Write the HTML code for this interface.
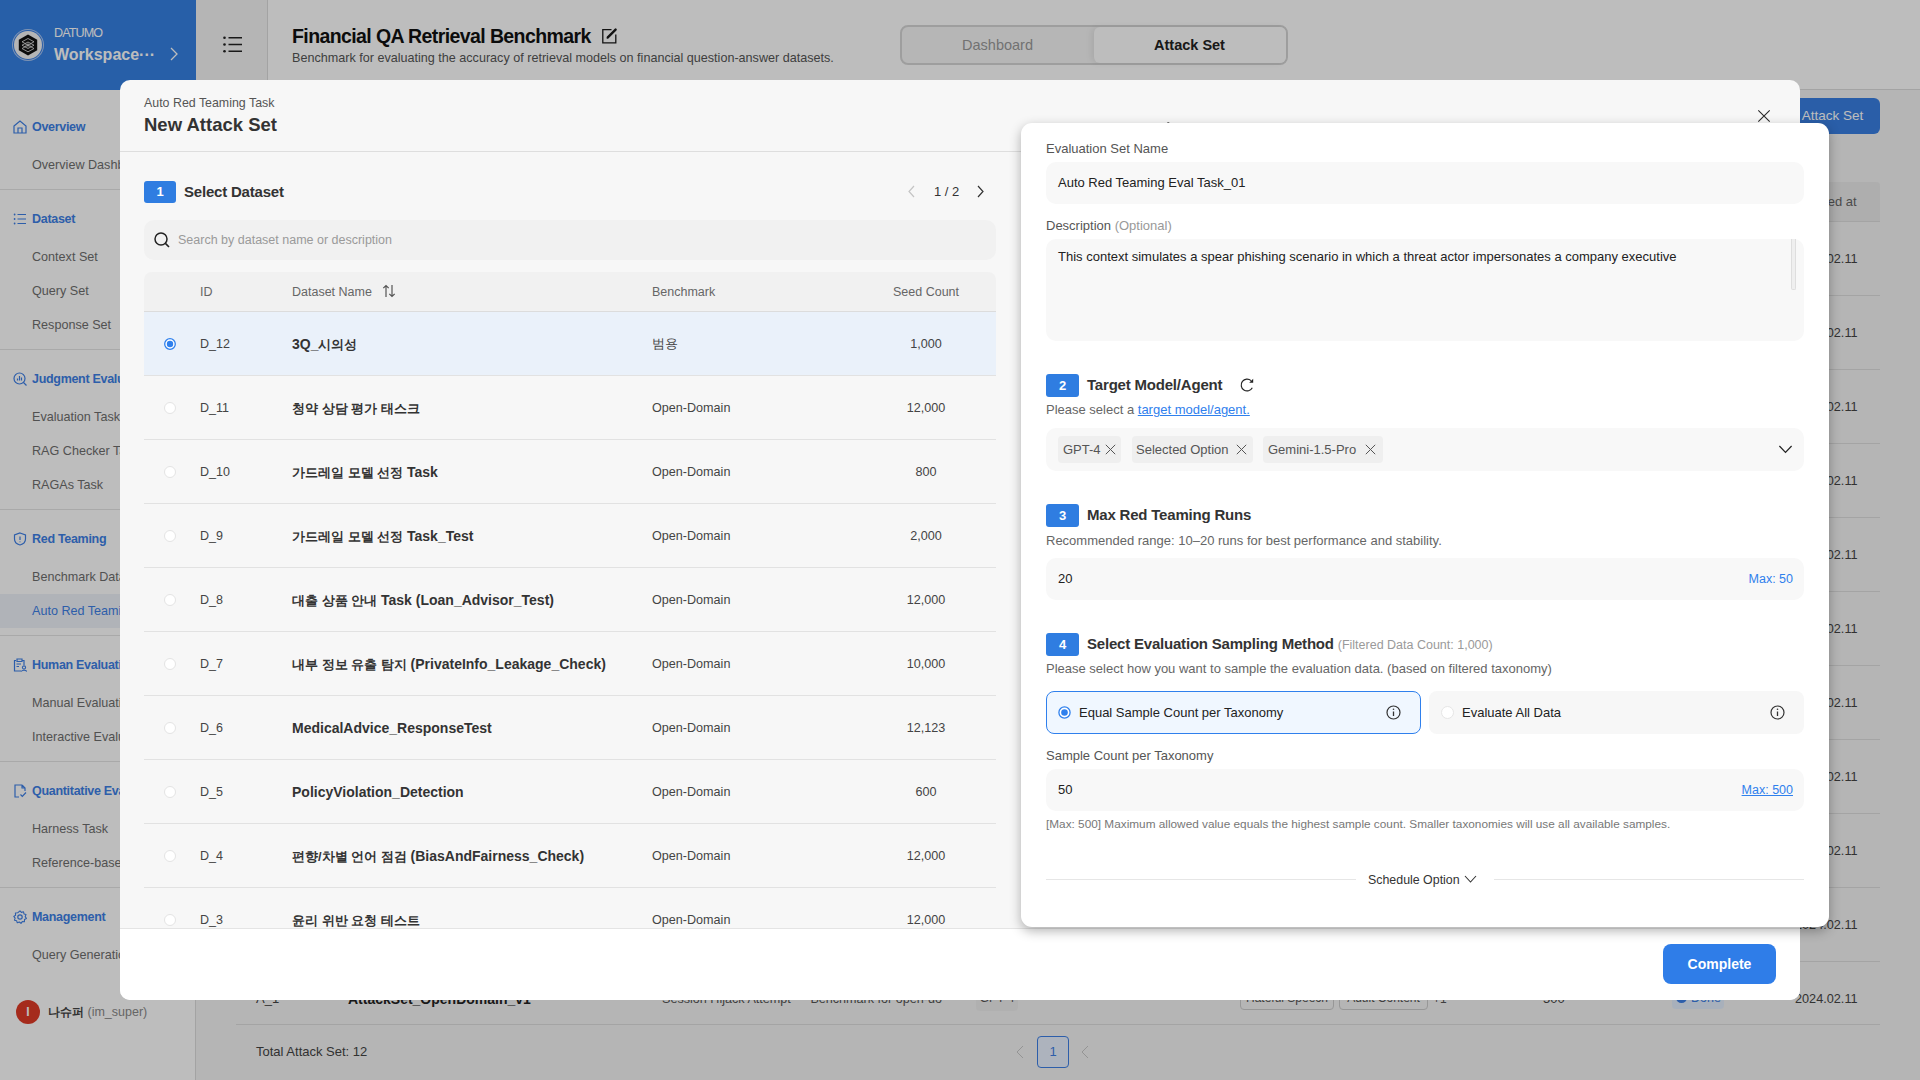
<!DOCTYPE html>
<html><head><meta charset="utf-8">
<style>
*{box-sizing:border-box;margin:0;padding:0}
html,body{width:1920px;height:1080px;overflow:hidden;background:#fff;font-family:"Liberation Sans",sans-serif;color:#333}
.a{position:absolute;white-space:nowrap}
.t{position:absolute;white-space:nowrap;line-height:20px}
/* background page */
#side{position:absolute;left:0;top:0;width:196px;height:1080px;background:#fff;border-right:1px solid #dcdcdc}
#sidehead{position:absolute;left:0;top:0;width:196px;height:90px;background:#3580e3}
.nav{margin-top:1px;position:absolute;left:32px;font-size:12.5px;font-weight:700;letter-spacing:-0.3px;color:#3d7fe6;line-height:20px}
.sub{margin-top:1px;position:absolute;left:32px;font-size:12.6px;color:#6e6e6e;line-height:20px}
.div{position:absolute;left:0;width:196px;height:1px;background:#e4e4e4}
.nicon{position:absolute;left:13px;width:14px;height:14px}
#ov{position:absolute;left:0;top:0;width:1920px;height:1080px;background:rgba(0,0,0,0.26)}
/* modal */
#modal{position:absolute;left:120px;top:80px;width:1680px;height:920px;background:#f7f7f7;border-radius:10px;overflow:hidden}
.badge{position:absolute;width:33px;height:23px;background:#2f7de1;border-radius:3px;color:#fff;font-size:13px;font-weight:700;text-align:center;line-height:23px}
.h2{margin-top:1px;position:absolute;font-size:15px;font-weight:700;color:#333;line-height:22px;letter-spacing:-0.2px;white-space:nowrap}
.row{position:absolute;left:24px;width:852px;height:64px;border-bottom:1px solid #e2e2e2}
.row .rd{position:absolute;left:20px;top:26px;width:12px;height:12px;border-radius:50%;background:#fff;border:1px solid #e4e4e4}
.row .id{position:absolute;left:56px;top:22px;font-size:12.5px;color:#444;line-height:20px}
.row .nm{position:absolute;left:148px;top:21px;font-size:14px;font-weight:700;color:#333;line-height:22px;white-space:nowrap}
.row .bm{position:absolute;left:508px;top:22px;font-size:12.6px;color:#444;line-height:20px}
.row .sc{position:absolute;left:722px;width:120px;text-align:center;top:22px;font-size:12.6px;color:#444;line-height:20px}
/* right panel */
#rp{position:absolute;left:1021px;top:123px;width:808px;height:804px;background:#fff;border-radius:11px;box-shadow:0 4px 12px rgba(0,0,0,0.3);overflow:hidden}
.lbl{margin-top:1px;position:absolute;left:25px;font-size:13px;color:#555;line-height:20px;white-space:nowrap}
.inp{position:absolute;left:25px;width:758px;background:#f8f8f8;border-radius:10px}
.gray{color:#999}
</style></head><body>

<!-- ============ BACKGROUND PAGE ============ -->
<div id="side">
  <div id="sidehead">
    <div class="a" style="left:14px;top:31px;width:28px;height:28px;border-radius:50%;background:#f4f4f4;box-shadow:0 0 0 1px #397fe3,0 0 0 2px #a9c6f2"></div>
    <svg class="a" style="left:18px;top:34px" width="20" height="22" viewBox="0 0 20 22"><path d="M10 0.5 L19.2 5.8 L19.2 16.2 L10 21.5 L0.8 16.2 L0.8 5.8 Z" fill="#111"/><path d="M10 4.5 L16 7.8 L10 11.1 L4 7.8 Z M10 8 L16 11.2 L10 14.5 L4 11.2 Z M10 11.3 L16 14.5 L10 17.8 L4 14.5 Z" fill="none" stroke="#e8e8e8" stroke-width="0.8"/><path d="M7 11 H13 M10 8.5 V13.5" stroke="#e8e8e8" stroke-width="0.6"/></svg>
    <div class="a" style="left:54px;top:25px;font-size:12.6px;letter-spacing:-0.9px;color:#fff;line-height:16px">DATUMO</div>
    <div class="a" style="left:54px;top:44px;font-size:16px;font-weight:700;color:#fff;line-height:22px">Workspace···</div>
    <svg class="a" style="left:169px;top:47px" width="10" height="14" viewBox="0 0 10 14"><path d="M2 1 L8 7 L2 13" fill="none" stroke="#fff" stroke-width="1.3"/></svg>
  </div>
  <!-- nav -->
  <svg class="nicon" style="top:120px" viewBox="0 0 14 14"><path d="M1 6 L7 1 L13 6 L13 13 L1 13 Z M5 13 L5 8 L9 8 L9 13" fill="none" stroke="#3d7fe6" stroke-width="1.2"/></svg>
  <div class="nav" style="top:116px">Overview</div>
  <div class="sub" style="top:154px">Overview Dashboard</div>
  <div class="div" style="top:189px"></div>
  <svg class="nicon" style="top:212px" viewBox="0 0 14 14"><path d="M4.5 2.5 H13 M4.5 7 H13 M4.5 11.5 H13" stroke="#3d7fe6" stroke-width="1.2"/><circle cx="1.6" cy="2.5" r="0.9" fill="#3d7fe6"/><circle cx="1.6" cy="7" r="0.9" fill="#3d7fe6"/><circle cx="1.6" cy="11.5" r="0.9" fill="#3d7fe6"/></svg>
  <div class="nav" style="top:208px">Dataset</div>
  <div class="sub" style="top:246px">Context Set</div>
  <div class="sub" style="top:280px">Query Set</div>
  <div class="sub" style="top:314px">Response Set</div>
  <div class="div" style="top:349px"></div>
  <svg class="nicon" style="top:372px" viewBox="0 0 14 14"><circle cx="6.5" cy="6.5" r="5.5" fill="none" stroke="#3d7fe6" stroke-width="1.2"/><path d="M10.5 10.5 L13.5 13.5 M4.5 8.5 V6.5 M6.5 8.5 V4 M8.5 8.5 V5.5" stroke="#3d7fe6" stroke-width="1.2"/></svg>
  <div class="nav" style="top:368px">Judgment Evaluation</div>
  <div class="sub" style="top:406px">Evaluation Task</div>
  <div class="sub" style="top:440px">RAG Checker Task</div>
  <div class="sub" style="top:474px">RAGAs Task</div>
  <div class="div" style="top:509px"></div>
  <svg class="nicon" style="top:532px" viewBox="0 0 14 14"><path d="M7 1 L12.5 3 V7 C12.5 10 10 12.2 7 13 C4 12.2 1.5 10 1.5 7 V3 Z" fill="none" stroke="#3d7fe6" stroke-width="1.2"/><path d="M7 4.5 V8 M7 9.5 V10.3" stroke="#3d7fe6" stroke-width="1.2"/></svg>
  <div class="nav" style="top:528px">Red Teaming</div>
  <div class="sub" style="top:566px">Benchmark Dataset</div>
  <div class="a" style="left:0;top:594px;width:196px;height:34px;background:#eef2f8"></div>
  <div class="sub" style="top:600px;color:#3d7fe6">Auto Red Teaming</div>
  <div class="div" style="top:635px"></div>
  <svg class="nicon" style="top:658px" viewBox="0 0 14 14"><path d="M3 2.5 H1.5 V13 H8 M4 1 H9 V3.5 H4 Z M9 2.5 H11 V7" fill="none" stroke="#3d7fe6" stroke-width="1.2"/><path d="M3.5 6 H8 M3.5 8.5 H6" stroke="#3d7fe6" stroke-width="1"/><circle cx="11" cy="9.5" r="1.6" fill="none" stroke="#3d7fe6" stroke-width="1.1"/><path d="M8.3 13.5 C8.8 11.8 13.2 11.8 13.7 13.5" fill="none" stroke="#3d7fe6" stroke-width="1.1"/></svg>
  <div class="nav" style="top:654px">Human Evaluation</div>
  <div class="sub" style="top:692px">Manual Evaluation</div>
  <div class="sub" style="top:726px">Interactive Evaluation</div>
  <div class="div" style="top:761px"></div>
  <svg class="nicon" style="top:784px" viewBox="0 0 14 14"><path d="M9 1 H2 V13 H6 M9 1 L12 4 V7 M9 1 V4 H12" fill="none" stroke="#3d7fe6" stroke-width="1.2"/><path d="M7.5 10.5 L9.3 12.3 L13 8.5" fill="none" stroke="#3d7fe6" stroke-width="1.2"/></svg>
  <div class="nav" style="top:780px">Quantitative Evaluation</div>
  <div class="sub" style="top:818px">Harness Task</div>
  <div class="sub" style="top:852px">Reference-based</div>
  <div class="div" style="top:887px"></div>
  <svg class="nicon" style="top:910px" viewBox="0 0 14 14"><circle cx="7" cy="7" r="2.2" fill="none" stroke="#3d7fe6" stroke-width="1.2"/><path d="M7 0.8 L8.4 2.4 L10.5 1.8 L11 3.9 L13 4.6 L12.2 6.6 L13.4 8.4 L11.5 9.5 L11.4 11.7 L9.3 11.6 L8 13.3 L6.3 12 L4.3 12.8 L3.6 10.7 L1.5 10.2 L2.1 8.1 L0.8 6.4 L2.6 5.2 L2.4 3 L4.6 2.8 Z" fill="none" stroke="#3d7fe6" stroke-width="1.1" stroke-linejoin="round"/></svg>
  <div class="nav" style="top:906px">Management</div>
  <div class="sub" style="top:944px">Query Generation</div>
  <!-- user -->
  <div class="a" style="left:16px;top:1000px;width:24px;height:24px;border-radius:50%;background:#df3a27;color:#fff;font-size:12px;font-weight:700;text-align:center;line-height:24px">I</div>
  <div class="a" style="left:48px;top:1002px;font-size:12.5px;color:#333;line-height:20px"><span style="font-size:11.8px;font-weight:700;color:#444">나슈퍼</span> <span style="color:#8a8a8a">(im_super)</span></div>
</div>

<!-- top header -->
<div class="a" style="left:196px;top:0;width:1724px;height:90px;border-bottom:1px solid #dcdcdc;background:#fff"></div>
<div class="a" style="left:196px;top:0;width:71px;height:90px;background:#f4f4f4;border-bottom:1px solid #dcdcdc"></div>
<div class="a" style="left:267px;top:0;width:1px;height:90px;background:#dcdcdc"></div>
<svg class="a" style="left:223px;top:36px" width="20" height="17" viewBox="0 0 20 17"><circle cx="1.5" cy="1.8" r="1.3" fill="#222"/><circle cx="1.5" cy="8.5" r="1.3" fill="#222"/><circle cx="1.5" cy="15.2" r="1.3" fill="#222"/><path d="M5.5 1.8 H19 M5.5 8.5 H19 M5.5 15.2 H19" stroke="#222" stroke-width="1.6"/></svg>
<div class="a" style="left:292px;top:24px;font-size:19.5px;font-weight:700;color:#111;line-height:24px;letter-spacing:-0.6px">Financial QA Retrieval Benchmark</div>
<svg class="a" style="left:600px;top:27px" width="19" height="19" viewBox="0 0 19 19"><path d="M11.5 2.6 H2.8 V15.8 H15.8 V7.5" fill="none" stroke="#1a1a1a" stroke-width="1.3"/><path d="M7.8 10.4 L15.6 2.6" stroke="#1a1a1a" stroke-width="2.4" stroke-linecap="round"/><path d="M6.6 11.8 L7.2 9.6 L8.6 11 Z" fill="#1a1a1a"/></svg>
<div class="a" style="left:292px;top:49px;font-size:12.6px;color:#555;line-height:18px">Benchmark for evaluating the accuracy of retrieval models on financial question-answer datasets.</div>
<!-- tabs -->
<div class="a" style="left:900px;top:25px;width:388px;height:40px;border:2px solid #d6d6d6;border-radius:8px;background:#f6f6f6"></div>
<div class="a" style="left:1094px;top:27px;width:192px;height:36px;border-radius:6px;background:#fff;box-shadow:-3px 0 6px rgba(0,0,0,0.07)"></div>
<div class="a" style="left:902px;top:34px;width:191px;text-align:center;font-size:14.5px;color:#9a9a9a;line-height:22px">Dashboard</div>
<div class="a" style="left:1093px;top:34px;width:193px;text-align:center;font-size:14.5px;font-weight:700;color:#222;line-height:22px">Attack Set</div>

<!-- main content behind -->
<div class="a" style="left:196px;top:90px;width:1724px;height:990px;background:#f4f4f4"></div>
<div class="a" style="left:1760px;top:98px;width:120px;height:36px;border-radius:6px;background:#397fe3;color:#fff;font-size:13.5px;text-align:right;padding-right:24px;line-height:36px">+ New Attack Set</div>
<div class="a" style="left:236px;top:182px;width:1644px;height:40px;background:#ebebeb;border-radius:4px 4px 0 0;border-bottom:1px solid #ddd"></div>
<div class="a" style="left:1796px;top:192px;font-size:13px;color:#666;line-height:20px">Created at</div>
<div id="bgrows"><div class="a" style="left:1795px;top:249px;font-size:12.7px;color:#444;line-height:20px">2024.02.11</div>
<div class="a" style="left:236px;top:295px;width:1644px;height:1px;background:#ddd"></div>
<div class="a" style="left:1795px;top:323px;font-size:12.7px;color:#444;line-height:20px">2024.02.11</div>
<div class="a" style="left:236px;top:369px;width:1644px;height:1px;background:#ddd"></div>
<div class="a" style="left:1795px;top:397px;font-size:12.7px;color:#444;line-height:20px">2024.02.11</div>
<div class="a" style="left:236px;top:443px;width:1644px;height:1px;background:#ddd"></div>
<div class="a" style="left:1795px;top:471px;font-size:12.7px;color:#444;line-height:20px">2024.02.11</div>
<div class="a" style="left:236px;top:517px;width:1644px;height:1px;background:#ddd"></div>
<div class="a" style="left:1795px;top:545px;font-size:12.7px;color:#444;line-height:20px">2024.02.11</div>
<div class="a" style="left:236px;top:591px;width:1644px;height:1px;background:#ddd"></div>
<div class="a" style="left:1795px;top:619px;font-size:12.7px;color:#444;line-height:20px">2024.02.11</div>
<div class="a" style="left:236px;top:665px;width:1644px;height:1px;background:#ddd"></div>
<div class="a" style="left:1795px;top:693px;font-size:12.7px;color:#444;line-height:20px">2024.02.11</div>
<div class="a" style="left:236px;top:739px;width:1644px;height:1px;background:#ddd"></div>
<div class="a" style="left:1795px;top:767px;font-size:12.7px;color:#444;line-height:20px">2024.02.11</div>
<div class="a" style="left:236px;top:813px;width:1644px;height:1px;background:#ddd"></div>
<div class="a" style="left:1795px;top:841px;font-size:12.7px;color:#444;line-height:20px">2024.02.11</div>
<div class="a" style="left:236px;top:887px;width:1644px;height:1px;background:#ddd"></div>
<div class="a" style="left:1795px;top:915px;font-size:12.7px;color:#444;line-height:20px">2024.02.11</div>
<div class="a" style="left:236px;top:961px;width:1644px;height:1px;background:#ddd"></div>
<div class="a" style="left:1795px;top:989px;font-size:12.7px;color:#444;line-height:20px">2024.02.11</div>
<div class="a" style="left:256px;top:989px;font-size:13px;color:#444;line-height:20px">A_1</div>
<div class="a" style="left:348px;top:988px;font-size:14px;font-weight:700;color:#222;line-height:22px">AttackSet_OpenDomain_v1</div>
<div class="a" style="left:662px;top:989px;font-size:12.6px;color:#555;line-height:20px">Session Hijack Attempt — Benchmark for open-do</div>
<div class="a" style="left:976px;top:985px;width:42px;height:26px;background:#eee;border-radius:4px;font-size:12px;color:#555;line-height:26px;text-align:center">GPT-4</div>
<div class="a" style="left:1240px;top:986px;width:94px;height:24px;border:1px solid #ccc;border-radius:4px;font-size:12px;color:#555;line-height:22px;text-align:center">Hateful Speech</div>
<div class="a" style="left:1339px;top:986px;width:89px;height:24px;border:1px solid #ccc;border-radius:4px;font-size:12px;color:#555;line-height:22px;text-align:center">Adult Content</div>
<div class="a" style="left:1433px;top:989px;font-size:12px;color:#555;line-height:20px">+1</div>
<div class="a" style="left:1543px;top:989px;font-size:13px;color:#444;line-height:20px">500</div>
<div class="a" style="left:1672px;top:987px;width:52px;height:22px;background:#e3eefc;border-radius:4px;font-size:12.5px;color:#3d7fe6;line-height:22px;padding-left:4px"><span style="display:inline-block;width:11px;height:11px;border-radius:50%;background:#3d7fe6;vertical-align:-1px;margin-right:4px"></span>Done</div></div>
<div class="a" style="left:236px;top:1024px;width:1644px;height:1px;background:#ddd"></div>
<div class="a" style="left:256px;top:1042px;font-size:13px;color:#444;line-height:20px">Total Attack Set: 12</div>
<svg class="a" style="left:1015px;top:1045px" width="10" height="14" viewBox="0 0 10 14"><path d="M8 1 L2 7 L8 13" fill="none" stroke="#c8c8c8" stroke-width="1"/></svg>
<div class="a" style="left:1037px;top:1036px;width:32px;height:32px;border:1px solid #3d7fe6;border-radius:4px;background:#eaf2ff;color:#3d7fe6;font-size:13px;text-align:center;line-height:30px">1</div>
<svg class="a" style="left:1080px;top:1045px" width="10" height="14" viewBox="0 0 10 14"><path d="M8 1 L2 7 L8 13" fill="none" stroke="#c8c8c8" stroke-width="1"/></svg>

<div id="ov"></div>

<!-- ============ MODAL ============ -->
<div id="modal">
  <div class="a" style="left:24px;top:14px;font-size:12.4px;color:#555;line-height:18px">Auto Red Teaming Task</div>
  <div class="a" style="left:24px;top:33px;font-size:18.5px;font-weight:700;color:#333;line-height:24px">New Attack Set</div>
  <svg class="a" style="left:1637px;top:29px" width="14" height="14" viewBox="0 0 14 14"><path d="M1.3 1.3 L12.7 12.7 M12.7 1.3 L1.3 12.7" stroke="#2a2a2a" stroke-width="1.1"/></svg>
  <div class="a" style="left:0;top:71px;width:1680px;height:1px;background:#dedede"></div>

  <!-- step 1 -->
  <div class="badge" style="left:24px;top:101px;width:32px;height:22px;line-height:21px">1</div>
  <div class="h2" style="left:64px;top:100px">Select Dataset</div>
  <svg class="a" style="left:787px;top:105px" width="9" height="13" viewBox="0 0 9 13"><path d="M7 1 L2 6.5 L7 12" fill="none" stroke="#c4c4c4" stroke-width="1.2"/></svg>
  <div class="a" style="left:814px;top:102px;font-size:13px;color:#333;line-height:20px">1 / 2</div>
  <svg class="a" style="left:856px;top:105px" width="9" height="13" viewBox="0 0 9 13"><path d="M2 1 L7 6.5 L2 12" fill="none" stroke="#333" stroke-width="1.2"/></svg>
  <div class="a" style="left:24px;top:140px;width:852px;height:40px;background:#f1f1f1;border-radius:10px"></div>
  <svg class="a" style="left:33px;top:151px" width="18" height="18" viewBox="0 0 18 18"><circle cx="8" cy="8" r="6" fill="none" stroke="#222" stroke-width="1.5"/><path d="M12.4 12.4 L16 16" stroke="#222" stroke-width="1.6"/></svg>
  <div class="a" style="left:58px;top:150px;font-size:12.5px;color:#9a9a9a;line-height:20px">Search by dataset name or description</div>

  <!-- table -->
  <div class="a" style="left:24px;top:192px;width:852px;height:40px;background:#f1f1f1;border-radius:8px 8px 0 0;border-bottom:1px solid #dcdcdc"></div>
  <div class="a" style="left:80px;top:202px;font-size:12.5px;color:#666;line-height:20px">ID</div>
  <div class="a" style="left:172px;top:202px;font-size:12.5px;color:#666;line-height:20px">Dataset Name</div>
  <svg class="a" style="left:262px;top:204px" width="14" height="14" viewBox="0 0 14 14"><path d="M4 13 V1.5 M1.3 4.2 L4 1.5 L6.7 4.2 M10 1 V12.5 M7.3 9.8 L10 12.5 L12.7 9.8" fill="none" stroke="#555" stroke-width="1.2"/></svg>
  <div class="a" style="left:532px;top:202px;font-size:12.5px;color:#666;line-height:20px">Benchmark</div>
  <div class="a" style="left:746px;top:202px;width:120px;text-align:center;font-size:12.5px;color:#666;line-height:20px">Seed Count</div>

  <div id="rows" class="a" style="left:0;top:232px;width:900px;height:616px;overflow:hidden">
    <div class="row" style="top:0;background:#eaf1fa"><svg style="position:absolute;left:20px;top:26px" width="12" height="12" viewBox="0 0 12 12"><circle cx="6" cy="6" r="5.3" fill="#fff" stroke="#2f80ed" stroke-width="1.3"/><circle cx="6" cy="6" r="3.2" fill="#2f80ed"/></svg><div class="id">D_12</div><div class="nm">3Q_<span style="font-size:12.8px">시의성</span></div><div class="bm">범용</div><div class="sc">1,000</div></div>
    <div class="row" style="top:64px"><div class="rd"></div><div class="id">D_11</div><div class="nm"><span style="font-size:12.8px">청약 상담 평가 태스크</span></div><div class="bm">Open-Domain</div><div class="sc">12,000</div></div>
    <div class="row" style="top:128px"><div class="rd"></div><div class="id">D_10</div><div class="nm"><span style="font-size:12.8px">가드레일 모델 선정</span> Task</div><div class="bm">Open-Domain</div><div class="sc">800</div></div>
    <div class="row" style="top:192px"><div class="rd"></div><div class="id">D_9</div><div class="nm"><span style="font-size:12.8px">가드레일 모델 선정</span> Task_Test</div><div class="bm">Open-Domain</div><div class="sc">2,000</div></div>
    <div class="row" style="top:256px"><div class="rd"></div><div class="id">D_8</div><div class="nm"><span style="font-size:12.8px">대출 상품 안내</span> Task (Loan_Advisor_Test)</div><div class="bm">Open-Domain</div><div class="sc">12,000</div></div>
    <div class="row" style="top:320px"><div class="rd"></div><div class="id">D_7</div><div class="nm"><span style="font-size:12.8px">내부 정보 유출 탐지</span> (PrivateInfo_Leakage_Check)</div><div class="bm">Open-Domain</div><div class="sc">10,000</div></div>
    <div class="row" style="top:384px"><div class="rd"></div><div class="id">D_6</div><div class="nm">MedicalAdvice_ResponseTest</div><div class="bm">Open-Domain</div><div class="sc">12,123</div></div>
    <div class="row" style="top:448px"><div class="rd"></div><div class="id">D_5</div><div class="nm">PolicyViolation_Detection</div><div class="bm">Open-Domain</div><div class="sc">600</div></div>
    <div class="row" style="top:512px"><div class="rd"></div><div class="id">D_4</div><div class="nm"><span style="font-size:12.8px">편향/차별 언어 점검</span> (BiasAndFairness_Check)</div><div class="bm">Open-Domain</div><div class="sc">12,000</div></div>
    <div class="row" style="top:576px"><div class="rd"></div><div class="id">D_3</div><div class="nm"><span style="font-size:12.8px">윤리 위반 요청 테스트</span></div><div class="bm">Open-Domain</div><div class="sc">12,000</div></div>
  </div>

  <!-- footer -->
  <div class="a" style="left:0;top:848px;width:1680px;height:72px;background:#fff;border-top:1px solid #e4e4e4"></div>
  <div class="a" style="left:1543px;top:864px;width:113px;height:40px;background:#2f7de8;border-radius:8px;color:#fff;font-size:14px;font-weight:700;text-align:center;line-height:40px">Complete</div>
</div>

<!-- ============ RIGHT PANEL ============ -->
<div class="a" style="left:1167px;top:122px;width:2px;height:2px;background:#777;transform:skewX(-30deg)"></div>
<div id="rp">
  <div class="lbl" style="top:15px">Evaluation Set Name</div>
  <div class="inp" style="top:39px;height:42px"></div>
  <div class="a" style="left:37px;top:50px;font-size:13px;color:#222;line-height:20px">Auto Red Teaming Eval Task_01</div>
  <div class="lbl" style="top:92px">Description <span class="gray">(Optional)</span></div>
  <div class="inp" style="top:116px;height:102px"></div>
  <div class="a" style="left:37px;top:124px;font-size:13px;color:#222;line-height:20px">This context simulates a spear phishing scenario in which a threat actor impersonates a company executive</div>
  <div class="a" style="left:770px;top:116px;width:5px;height:51px;border:1px solid #dedede;border-top:none;border-radius:0 0 2px 2px;background:#efefef"></div>

  <!-- step 2 -->
  <div class="badge" style="left:25px;top:251px">2</div>
  <div class="h2" style="left:66px;top:250px">Target Model/Agent</div>
  <svg class="a" style="left:209px;top:247px" width="60" height="30" viewBox="0 0 60 30"><path d="M21.05 10.62 A5.9 5.9 0 1 0 22.31 17.77" fill="none" stroke="#222" stroke-width="1.15"/><path d="M23.2 8.8 L23.2 12.7 L19.2 12.7 Z" fill="#222"/></svg>
  <div class="lbl" style="color:#666;top:276px">Please select a <span style="color:#2f80ed;text-decoration:underline">target model/agent.</span></div>
  <div class="inp" style="top:305px;height:43px"></div>
  <div class="a" style="left:37px;top:313px;width:63px;height:27px;background:#efefef;border-radius:4px"></div>
  <div class="a" style="left:42px;top:317px;font-size:13px;color:#555;line-height:20px">GPT-4</div>
  <div class="a" style="left:111px;top:313px;width:121px;height:27px;background:#efefef;border-radius:4px"></div>
  <div class="a" style="left:115px;top:317px;font-size:13px;color:#555;line-height:20px">Selected Option</div>
  <div class="a" style="left:242px;top:313px;width:120px;height:27px;background:#efefef;border-radius:4px"></div>
  <div class="a" style="left:247px;top:317px;font-size:13px;color:#555;line-height:20px">Gemini-1.5-Pro</div>
  <svg class="a" style="left:84px;top:321px" width="11" height="11" viewBox="0 0 11 11"><path d="M0.8 0.8 L10.2 10.2 M10.2 0.8 L0.8 10.2" stroke="#555" stroke-width="1"/></svg>
  <svg class="a" style="left:215px;top:321px" width="11" height="11" viewBox="0 0 11 11"><path d="M0.8 0.8 L10.2 10.2 M10.2 0.8 L0.8 10.2" stroke="#555" stroke-width="1"/></svg>
  <svg class="a" style="left:344px;top:321px" width="11" height="11" viewBox="0 0 11 11"><path d="M0.8 0.8 L10.2 10.2 M10.2 0.8 L0.8 10.2" stroke="#555" stroke-width="1"/></svg>
  <svg class="a" style="left:757px;top:322px" width="15" height="10" viewBox="0 0 15 10"><path d="M1.4 1 L7.5 7.4 L13.6 1" fill="none" stroke="#222" stroke-width="1.2"/></svg>

  <!-- step 3 -->
  <div class="badge" style="left:25px;top:381px">3</div>
  <div class="h2" style="left:66px;top:380px">Max Red Teaming Runs</div>
  <div class="lbl" style="color:#666;top:407px">Recommended range: 10–20 runs for best performance and stability.</div>
  <div class="inp" style="top:435px;height:42px"></div>
  <div class="a" style="left:37px;top:446px;font-size:13px;color:#222;line-height:20px">20</div>
  <div class="a" style="left:672px;top:446px;width:100px;text-align:right;font-size:12.5px;color:#2f80ed;line-height:20px">Max: 50</div>

  <!-- step 4 -->
  <div class="badge" style="left:25px;top:510px">4</div>
  <div class="h2" style="left:66px;top:509px">Select Evaluation Sampling Method <span style="font-weight:400;font-size:12.5px;color:#9a9a9a;letter-spacing:0">(Filtered Data Count: 1,000)</span></div>
  <div class="lbl" style="color:#666;top:535px">Please select how you want to sample the evaluation data. (based on filtered taxonomy)</div>
  <div class="a" style="left:25px;top:568px;width:375px;height:43px;border:1.5px solid #2f80ed;border-radius:8px;background:#f0f7ff"></div>
  <svg class="a" style="left:37px;top:583px" width="13" height="13" viewBox="0 0 13 13"><circle cx="6.5" cy="6.5" r="5.6" fill="#fff" stroke="#2f80ed" stroke-width="1.3"/><circle cx="6.5" cy="6.5" r="3.3" fill="#2f80ed"/></svg>
  <div class="a" style="left:58px;top:580px;font-size:13px;color:#222;line-height:20px">Equal Sample Count per Taxonomy</div>
  <svg class="a" style="left:365px;top:582px" width="15" height="15" viewBox="0 0 15 15"><circle cx="7.5" cy="7.5" r="6.5" fill="none" stroke="#333" stroke-width="1.2"/><path d="M7.5 6.5 V11" stroke="#333" stroke-width="1.3"/><circle cx="7.5" cy="4.2" r="0.8" fill="#333"/></svg>
  <div class="a" style="left:408px;top:568px;width:375px;height:43px;border-radius:8px;background:#f7f7f7"></div>
  <div class="a" style="left:420px;top:583px;width:13px;height:13px;border-radius:50%;border:1px solid #e6e6e6;background:#fff"></div>
  <div class="a" style="left:441px;top:580px;font-size:13px;color:#222;line-height:20px">Evaluate All Data</div>
  <svg class="a" style="left:749px;top:582px" width="15" height="15" viewBox="0 0 15 15"><circle cx="7.5" cy="7.5" r="6.5" fill="none" stroke="#333" stroke-width="1.2"/><path d="M7.5 6.5 V11" stroke="#333" stroke-width="1.3"/><circle cx="7.5" cy="4.2" r="0.8" fill="#333"/></svg>
  <div class="lbl" style="top:622px">Sample Count per Taxonomy</div>
  <div class="inp" style="top:646px;height:42px"></div>
  <div class="a" style="left:37px;top:657px;font-size:13px;color:#222;line-height:20px">50</div>
  <div class="a" style="left:672px;top:657px;width:100px;text-align:right;font-size:12.5px;color:#2f80ed;line-height:20px;text-decoration:underline">Max: 500</div>
  <div class="a" style="left:25px;top:692px;font-size:11.8px;color:#777;line-height:18px">[Max: 500] Maximum allowed value equals the highest sample count. Smaller taxonomies will use all available samples.</div>
  <div class="a" style="left:25px;top:756px;width:310px;height:1px;background:#e6e6e6"></div>
  <div class="a" style="left:473px;top:756px;width:310px;height:1px;background:#e6e6e6"></div>
  <div class="a" style="left:347px;top:747px;font-size:12.4px;color:#333;line-height:20px">Schedule Option</div>
  <svg class="a" style="left:443px;top:752px" width="13" height="9" viewBox="0 0 13 9"><path d="M1 1 L6.5 7 L12 1" fill="none" stroke="#333" stroke-width="1.1"/></svg>
</div>

</body></html>
